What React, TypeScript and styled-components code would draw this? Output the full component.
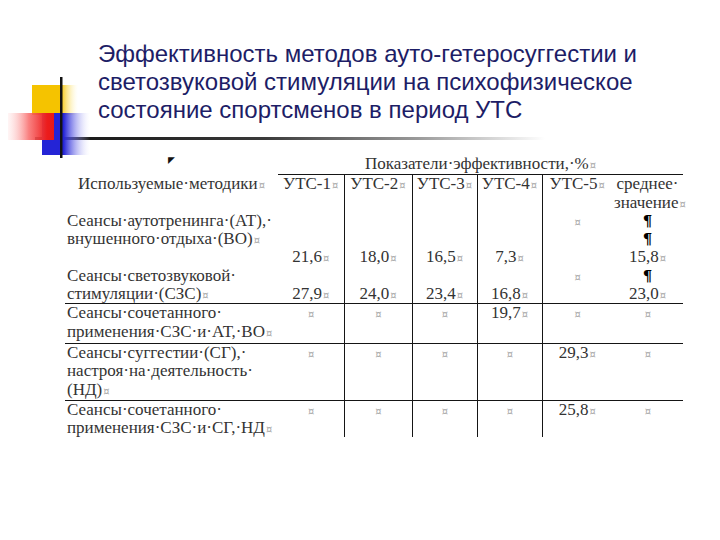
import styled, { createGlobalStyle } from "styled-components";

const GlobalStyle = createGlobalStyle`
  html, body {
    margin: 0;
    padding: 0;
    background: #ffffff;
  }
`;

const Slide = styled.div`
  position: relative;
  width: 720px;
  height: 540px;
  overflow: hidden;
  background: #ffffff;
`;

const Header = styled.header`
  position: relative;
  padding-top: 40px;
`;

const Title = styled.h1`
  margin: 0 0 0 98px;
  font-family: "Liberation Sans", Arial, sans-serif;
  font-weight: normal;
  font-size: 24px;
  line-height: 28px;
  color: #1d1d66;
`;

const Rule = styled.div`
  margin: 13px 0 0 35px;
  width: 510px;
  height: 3px;
  background: linear-gradient(
    to right,
    #111111 0%,
    #3a3a3a 45%,
    #9a9a9a 75%,
    rgba(255, 255, 255, 0) 100%
  );
`;

const LogoArt = styled.svg`
  position: absolute;
  left: 0;
  top: 70px;
`;

const Table = styled.table`
  margin: 13px 0 0 65px;
  width: 618px;
  table-layout: fixed;
  border-collapse: collapse;
  font-family: "Liberation Serif", "Times New Roman", serif;
  font-size: 17px;
  line-height: 18.3px;
  color: #333333;
`;

const Cell = styled.td<{
  $align?: "left" | "center";
  $valign?: "top" | "bottom";
  $left?: boolean;
  $top?: boolean;
  $bottom?: boolean;
  $pad?: number;
}>`
  padding: 0 2px ${(p) => p.$pad ?? 0}px;
  white-space: nowrap;
  text-align: ${(p) => p.$align ?? "center"};
  vertical-align: ${(p) => p.$valign ?? "top"};
  border-left: ${(p) => (p.$left ? "1px solid #151515" : "none")};
  border-top: ${(p) => (p.$top ? "1px solid #151515" : "none")};
  border-bottom: ${(p) => (p.$bottom ? "1px solid #151515" : "none")};
`;

const Caption = styled.div`
  padding: 2px 0 1px;
`;

const Pilcrow = styled.span`
  font-family: "DejaVu Serif", serif;
  font-weight: bold;
  font-size: 15px;
  color: #000000;
`;

const EndMark = styled.span`
  font-family: "DejaVu Sans", sans-serif;
  color: #a8a8a8;
  font-size: 10px;
  line-height: 0;
  margin-left: 1px;
`;

const Anchor = styled.span`
  display: inline-block;
  font-size: 9px;
  line-height: 0;
  color: #111111;
  transform: translateY(-4px);
`;

const cols = [213, 66, 68, 65, 65, 70, 71];

const Lines = ({ items }: { items: React.ReactNode[] }) => (
  <>
    {items.map((it, i) => (
      <div key={i}>{it === "" ? "\u00a0" : it}</div>
    ))}
  </>
);

const V = ({ v }: { v: string }) => (
  <>
    {v}
    <EndMark>¤</EndMark>
  </>
);

const Logo = () => (
  <LogoArt width="100" height="95" viewBox="0 0 100 95">
    <defs>
      <linearGradient id="yel" x1="0" y1="0" x2="1" y2="0">
        <stop offset="0" stopColor="#f5c300" />
        <stop offset="0.62" stopColor="#f5c300" />
        <stop offset="1" stopColor="#fff6c0" stopOpacity="0" />
      </linearGradient>
      <linearGradient id="red" x1="0" y1="0" x2="1" y2="0">
        <stop offset="0" stopColor="#ffd0d0" stopOpacity="0.2" />
        <stop offset="0.45" stopColor="#f86a6a" stopOpacity="0.85" />
        <stop offset="0.85" stopColor="#ec1c1c" />
        <stop offset="1" stopColor="#e81818" />
      </linearGradient>
      <linearGradient id="blu" x1="0" y1="0" x2="1" y2="0">
        <stop offset="0" stopColor="#2424d6" />
        <stop offset="0.45" stopColor="#2424d6" />
        <stop offset="1" stopColor="#dcdcff" stopOpacity="0" />
      </linearGradient>
    </defs>
    <rect x="32" y="15" width="46" height="30" fill="url(#yel)" />
    <rect x="42" y="43" width="48" height="42" fill="url(#blu)" />
    <rect x="8" y="43" width="46" height="27" fill="url(#red)" />
    <rect x="60" y="7" width="2.5" height="81" fill="#121212" />
  </LogoArt>
);

export default function App() {
  return (
    <>
      <GlobalStyle />
      <Slide>
        <Header>
          <Title>
            Эффективность методов ауто-гетеросуггестии и
            <br />
            светозвуковой стимуляции на психофизическое
            <br />
            состояние спортсменов в период УТС
          </Title>
          <Rule />
          <Logo />
        </Header>

        <Table>
          <colgroup>
            {cols.map((w, i) => (
              <col key={i} style={{ width: w }} />
            ))}
          </colgroup>
          <tbody>
            <tr>
              <Cell>
                <Anchor>◤</Anchor>
              </Cell>
              <Cell colSpan={6}>
                <Caption>
                  Показатели·эффективности,·%<EndMark>¤</EndMark>
                </Caption>
              </Cell>
            </tr>

            <tr>
              <Cell>
                <V v="Используемые·методики" />
              </Cell>
              <Cell $top>
                <V v="УТС-1" />
              </Cell>
              <Cell $top $left>
                <V v="УТС-2" />
              </Cell>
              <Cell $top $left>
                <V v="УТС-3" />
              </Cell>
              <Cell $top $left>
                <V v="УТС-4" />
              </Cell>
              <Cell $top $left>
                <V v="УТС-5" />
              </Cell>
              <Cell $top>
                <Lines items={["среднее·", <V v="значение" />]} />
              </Cell>
            </tr>

            <tr>
              <Cell $align="left">
                <Lines
                  items={[
                    "Сеансы·аутотренинга·(АТ),·",
                    <V v="внушенного·отдыха·(ВО)" />,
                    "",
                  ]}
                />
              </Cell>
              <Cell $valign="bottom">
                <V v="21,6" />
              </Cell>
              <Cell $valign="bottom" $left>
                <V v="18,0" />
              </Cell>
              <Cell $valign="bottom" $left>
                <V v="16,5" />
              </Cell>
              <Cell $valign="bottom" $left>
                <V v="7,3" />
              </Cell>
              <Cell $left>
                <EndMark>¤</EndMark>
              </Cell>
              <Cell>
                <Lines
                  items={[
                    <Pilcrow>¶</Pilcrow>,
                    <Pilcrow>¶</Pilcrow>,
                    <V v="15,8" />,
                  ]}
                />
              </Cell>
            </tr>

            <tr>
              <Cell $align="left" $bottom>
                <Lines
                  items={["Сеансы·светозвуковой·", <V v="стимуляции·(СЗС)" />]}
                />
              </Cell>
              <Cell $valign="bottom" $bottom>
                <V v="27,9" />
              </Cell>
              <Cell $valign="bottom" $bottom $left>
                <V v="24,0" />
              </Cell>
              <Cell $valign="bottom" $bottom $left>
                <V v="23,4" />
              </Cell>
              <Cell $valign="bottom" $bottom $left>
                <V v="16,8" />
              </Cell>
              <Cell $bottom $left>
                <EndMark>¤</EndMark>
              </Cell>
              <Cell $bottom>
                <Lines items={[<Pilcrow>¶</Pilcrow>, <V v="23,0" />]} />
              </Cell>
            </tr>

            <tr>
              <Cell $align="left" $bottom $pad={2}>
                <Lines
                  items={["Сеансы·сочетанного·", <V v="применения·СЗС·и·АТ,·ВО" />]}
                />
              </Cell>
              <Cell $bottom>
                <EndMark>¤</EndMark>
              </Cell>
              <Cell $bottom $left>
                <EndMark>¤</EndMark>
              </Cell>
              <Cell $bottom $left>
                <EndMark>¤</EndMark>
              </Cell>
              <Cell $bottom $left>
                <V v="19,7" />
              </Cell>
              <Cell $bottom $left>
                <EndMark>¤</EndMark>
              </Cell>
              <Cell $bottom>
                <EndMark>¤</EndMark>
              </Cell>
            </tr>

            <tr>
              <Cell $align="left" $bottom $pad={1}>
                <Lines
                  items={[
                    "Сеансы·суггестии·(СГ),·",
                    "настроя·на·деятельность·",
                    <V v="(НД)" />,
                  ]}
                />
              </Cell>
              <Cell $bottom>
                <EndMark>¤</EndMark>
              </Cell>
              <Cell $bottom $left>
                <EndMark>¤</EndMark>
              </Cell>
              <Cell $bottom $left>
                <EndMark>¤</EndMark>
              </Cell>
              <Cell $bottom $left>
                <EndMark>¤</EndMark>
              </Cell>
              <Cell $bottom $left>
                <V v="29,3" />
              </Cell>
              <Cell $bottom>
                <EndMark>¤</EndMark>
              </Cell>
            </tr>

            <tr>
              <Cell $align="left">
                <Lines
                  items={["Сеансы·сочетанного·", <V v="применения·СЗС·и·СГ,·НД" />]}
                />
              </Cell>
              <Cell>
                <EndMark>¤</EndMark>
              </Cell>
              <Cell $left>
                <EndMark>¤</EndMark>
              </Cell>
              <Cell $left>
                <EndMark>¤</EndMark>
              </Cell>
              <Cell $left>
                <EndMark>¤</EndMark>
              </Cell>
              <Cell $left>
                <V v="25,8" />
              </Cell>
              <Cell>
                <EndMark>¤</EndMark>
              </Cell>
            </tr>
          </tbody>
        </Table>
      </Slide>
    </>
  );
}
